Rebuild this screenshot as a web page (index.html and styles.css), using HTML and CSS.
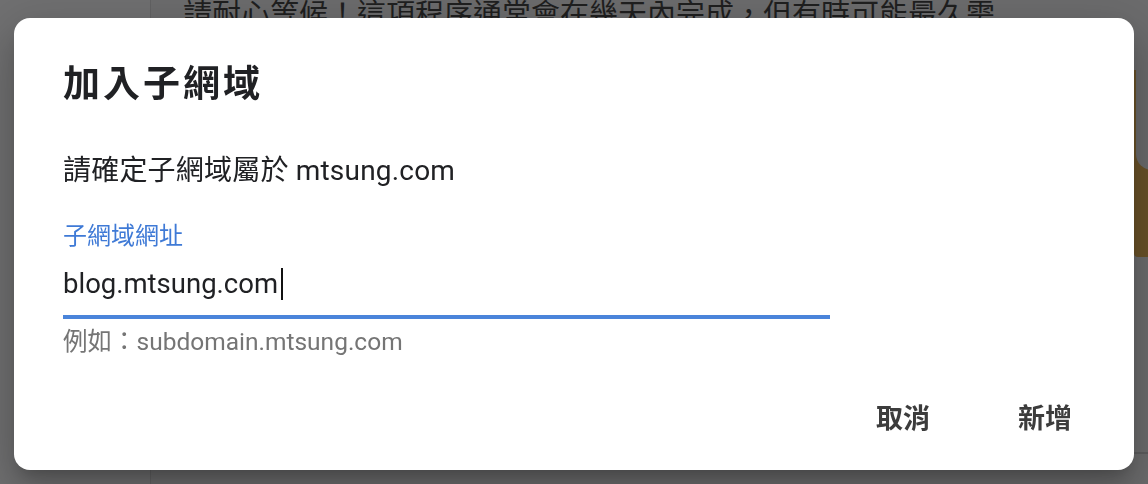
FILE: index.html
```html
<!DOCTYPE html>
<html lang="zh-Hant">
<head>
<meta charset="utf-8">
<title>加入子網域</title>
<link rel="stylesheet" href="styles.css">
</head>
<body>
<div class="page">
  <aside class="sidebar"></aside>
  <main class="main">
    <p class="notice">請耐心等候！這項程序通常會在幾天內完成，但有時可能最久需要幾週時間。</p>
    <div class="deco"><div class="deco-cut"></div></div>
    <div class="rule"></div>
  </main>
</div>

<div class="dialog" role="dialog" aria-labelledby="dlg-title">
  <h1 class="dialog-title" id="dlg-title">加入子網域</h1>
  <p class="dialog-text">請確定子網域屬於 mtsung.com</p>
  <div class="field">
    <label class="field-label" for="sub">子網域網址</label>
    <div class="field-input">
      <span class="field-value">blog.mtsung.com</span><span class="caret"></span>
    </div>
    <div class="field-hint">例如：subdomain.mtsung.com</div>
  </div>
  <div class="actions">
    <button class="btn">取消</button>
    <button class="btn">新增</button>
  </div>
</div>
</body>
</html>
```

FILE: styles.css
```css
* { box-sizing: border-box; }

html, body {
  margin: 0;
  padding: 0;
  width: 1148px;
  height: 484px;
  overflow: hidden;
  font-family: Roboto, "Noto Sans CJK TC", "Noto Sans", sans-serif;
}

body { background: #6b6b6c; }

.page {
  display: flex;
  height: 484px;
}

.sidebar {
  width: 151px;
  flex: none;
  background: #707071;
  border-right: 1px solid #626263;
}

.main {
  flex: 1;
  position: relative;
  background: #6c6c6d;
}

.notice {
  margin: 0 0 0 32px;
  width: 830px;
  font-size: 29px;
  line-height: 30px;
  color: #1f1f1f;
}

.deco {
  position: absolute;
  left: 983px;
  top: 70px;
  width: 20px;
  height: 187px;
  background: #6a5228;
  border-radius: 0 0 0 4px;
}

.deco-cut {
  margin-left: 2px;
  height: 100px;
  background: #6b6b6c;
  border-bottom-left-radius: 16px;
}

.rule {
  position: absolute;
  left: 983px;
  top: 452px;
  width: 20px;
  height: 2px;
  background: #5d5d5e;
}

.dialog {
  position: fixed;
  left: 14px;
  top: 18px;
  width: 1120px;
  height: 452px;
  background: #ffffff;
  border-radius: 16px;
  padding: 43px 38px 0 49px;
  box-shadow: 0 11px 15px -7px rgba(0,0,0,.2), 0 24px 38px 3px rgba(0,0,0,.14), 0 9px 46px 8px rgba(0,0,0,.12);
  display: flex;
  flex-direction: column;
}

.dialog-title {
  margin: 0;
  font-size: 37px;
  line-height: 48px;
  font-weight: 700;
  letter-spacing: 3px;
  color: #202124;
}

.dialog-text {
  margin: 42px 0 0;
  font-size: 28px;
  line-height: 40px;
  letter-spacing: 0.2px;
  color: #202124;
}

.field {
  margin-top: 29px;
  width: 767px;
  display: flex;
  flex-direction: column;
}

.field-label {
  font-size: 24px;
  line-height: 32px;
  color: #3f7ad6;
}

.field-input {
  margin-top: 12px;
  height: 55px;
  padding-bottom: 11px;
  border-bottom: 4px solid #4a84da;
  display: flex;
  align-items: center;
}

.field-value {
  font-size: 27.5px;
  line-height: 40px;
  color: #202124;
}

.caret {
  width: 2px;
  height: 32px;
  margin-left: 3px;
  background: #111;
}

.field-hint {
  margin-top: 8px;
  font-size: 24.5px;
  line-height: 30px;
  color: #757575;
}

.actions {
  margin-top: auto;
  margin-bottom: 26px;
  display: flex;
  justify-content: flex-end;
  gap: 40px;
}

.btn {
  height: 56px;
  padding: 0 24px;
  border: 0;
  background: transparent;
  font-family: inherit;
  font-size: 27px;
  font-weight: 700;
  color: #3c3c3c;
  cursor: pointer;
}
```
